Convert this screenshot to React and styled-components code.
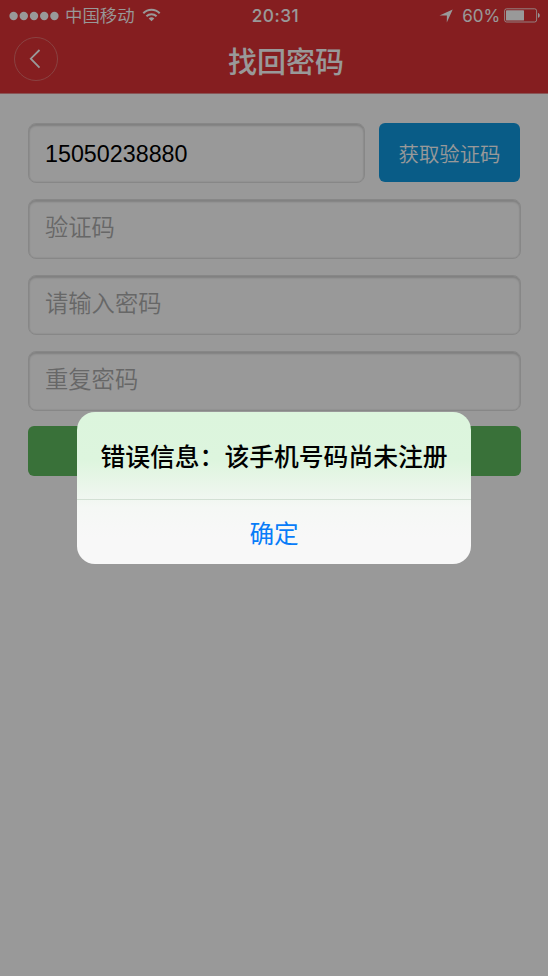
import styled, { createGlobalStyle } from "styled-components";

const GlobalStyle = createGlobalStyle`
  * {
    box-sizing: border-box;
  }
  body {
    margin: 0;
    background: #fff;
    font-family: "Liberation Sans", "Noto Sans CJK SC", sans-serif;
  }
  input, button {
    font-family: inherit;
    margin: 0;
  }
`;

const ScreenStyles = styled.div`
  position: relative;
  width: 548px;
  height: 976px;
  overflow: hidden;
  background: #fff;
`;

const HeaderStyles = styled.header`
  height: 94px;
  background: #de3236;
  border-bottom: 1px solid #e58e8f;
  color: #fff;
`;

const StatusBar = styled.div`
  display: grid;
  grid-template-columns: 1fr auto 1fr;
  align-items: center;
  height: 30px;
  padding: 0 8px 0 9px;
  font-family: Inter, "Noto Sans CJK SC", sans-serif;
  font-size: 17px;
  line-height: 30px;
`;

const StatusGroup = styled.div`
  display: flex;
  align-items: center;
  justify-content: ${(props) => (props.$end ? "flex-end" : "flex-start")};
`;

const SignalIcon = () => (
  <svg width="50" height="10" viewBox="0 0 50 10" fill="#fff">
    {[0, 1, 2, 3, 4].map((dot) => (
      <circle key={dot} cx={4.6 + dot * 10.2} cy="5" r="4.2" />
    ))}
  </svg>
);

const Carrier = styled.span`
  padding-top: 1px;
  font-size: 17.4px;
  font-weight: 350;
  margin: 0 7px 0 6px;
`;

const Time = styled.span`
  padding-left: 2px;
  font-size: 17.3px;
  font-weight: 500;
  letter-spacing: 0.5px;
`;

const Percent = styled.span`
  margin: 0 4px 0 9px;
  font-size: 17px;
  font-weight: 400;
  letter-spacing: -0.1px;
`;

const TitleBar = styled.div`
  display: grid;
  grid-template-columns: 44px 1fr 34px;
  align-items: center;
  height: 63px;
  padding: 0 0 0 14px;
`;

const BackButton = styled.button`
  display: flex;
  align-items: center;
  justify-content: center;
  width: 44px;
  height: 44px;
  margin-top: -5px;
  padding: 0 2px 0 0;
  border: 1px solid #e56f6e;
  border-radius: 50%;
  background: none;
  color: #fff;
`;

const Title = styled.h1`
  margin: 0;
  padding-top: 3px;
  font-size: 29px;
  line-height: 44px;
  font-weight: 500;
  text-align: center;
`;

const FormStyles = styled.form`
  display: flex;
  flex-direction: column;
  gap: 16px;
  padding: 29px 27px 0 28px;
`;

const PhoneRow = styled.div`
  display: flex;
  align-items: flex-start;
  gap: 14px;
`;

const Field = styled.input`
  display: block;
  width: ${(props) => props.$width || "100%"};
  height: 60px;
  padding: ${(props) => (props.$filled ? "2px 16px 0" : "0 16px 2px")};
  border: 1px solid #e2e2e2;
  border-radius: 8px;
  box-shadow: inset 0 2px 2px #d6d6d6, inset 0 0 1px 0.5px #e9e9e9;
  background: #fff;
  color: #000;
  font-size: 23.3px;
  font-weight: ${(props) => (props.$filled ? 400 : 350)};
  outline: none;
  &::placeholder {
    color: #acacac;
    opacity: 1;
  }
`;

const CodeButton = styled.button`
  width: 141px;
  height: 59px;
  padding: 1px 0 0;
  border: none;
  border-radius: 6px;
  background: #0f9ae2;
  color: #fff;
  font-size: 20.4px;
  font-weight: 350;
`;

const SubmitButton = styled.button`
  width: 100%;
  height: 50px;
  margin-top: -1px;
  border: none;
  border-radius: 6px;
  background: #60bc5f;
`;

const Overlay = styled.div`
  position: absolute;
  inset: 0;
  display: flex;
  align-items: center;
  justify-content: center;
  background: rgba(0, 0, 0, 0.4);
`;

const Dialog = styled.div`
  display: flex;
  flex-direction: column;
  width: 394px;
  height: 152px;
  border-radius: 18px;
  overflow: hidden;
  background: linear-gradient(#dcf5dd 0, #ddf5de 48px, #ecf6ec 78px, #f5f8f5 96px, #f8f8f8 125px);
`;

const Message = styled.p`
  height: 88px;
  margin: 0;
  border-bottom: 1px solid #d3e0d4;
  color: #000;
  font-size: 24.8px;
  line-height: 91px;
  font-weight: 500;
  text-align: center;
  white-space: nowrap;
`;

const ConfirmButton = styled.button`
  flex: 1;
  padding: 0 0 1px;
  border: none;
  background: none;
  color: #087cf8;
  font-size: 24.6px;
`;

const WifiIcon = () => (
  <svg width="19" height="15" viewBox="0 0 19 15" fill="none" stroke="#fff" strokeWidth="2">
    <path d="M1.3 5.3 C5.8 0.6 13.2 0.6 17.7 5.3" />
    <path d="M4.4 8.3 C7.3 5.5 11.7 5.5 14.6 8.3" />
    <path d="M6.7 10.5 C8.3 8.9 10.7 8.9 12.3 10.5 L9.5 13.3 Z" fill="#fff" stroke="none" />
  </svg>
);

const LocationIcon = () => (
  <svg width="14" height="14" viewBox="0 0 14 14" fill="#fff">
    <path d="M13.7 0.4 L7.8 13.5 L7.9 6.4 L0.5 6.6 Z" />
  </svg>
);

const BatteryIcon = () => (
  <svg width="36" height="15" viewBox="0 0 36 15" fill="none">
    <rect x="0.6" y="0.8" width="32" height="13.2" rx="2" stroke="#fff" strokeOpacity="0.8" />
    <rect x="2" y="2.2" width="18" height="10.4" rx="0.7" fill="#fff" />
    <path d="M34 5 C36.3 5.6 36.3 9.2 34 9.8 Z" fill="#fff" />
  </svg>
);

const ChevronIcon = () => (
  <svg width="12" height="20" viewBox="0 0 12 20" fill="none" stroke="#fff" strokeWidth="1.8">
    <path d="M10.5 1 L1.8 9.7 L10.5 18.6" />
  </svg>
);

const fields = [
  { name: "code", placeholder: "验证码" },
  { name: "password", placeholder: "请输入密码" },
  { name: "repeat", placeholder: "重复密码" },
];

export default function App() {
  return (
    <ScreenStyles>
      <GlobalStyle />
      <HeaderStyles>
        <StatusBar>
          <StatusGroup>
            <SignalIcon />
            <Carrier>中国移动</Carrier>
            <WifiIcon />
          </StatusGroup>
          <Time>20:31</Time>
          <StatusGroup $end>
            <LocationIcon />
            <Percent>60%</Percent>
            <BatteryIcon />
          </StatusGroup>
        </StatusBar>
        <TitleBar>
          <BackButton type="button">
            <ChevronIcon />
          </BackButton>
          <Title>找回密码</Title>
        </TitleBar>
      </HeaderStyles>
      <FormStyles>
        <PhoneRow>
          <Field $width="337px" $filled name="phone" defaultValue="15050238880" />
          <CodeButton type="button">获取验证码</CodeButton>
        </PhoneRow>
        {fields.map((field) => (
          <Field key={field.name} name={field.name} placeholder={field.placeholder} />
        ))}
        <SubmitButton type="button" />
      </FormStyles>
      <Overlay>
        <Dialog role="alertdialog">
          <Message>错误信息：该手机号码尚未注册</Message>
          <ConfirmButton type="button">确定</ConfirmButton>
        </Dialog>
      </Overlay>
    </ScreenStyles>
  );
}
